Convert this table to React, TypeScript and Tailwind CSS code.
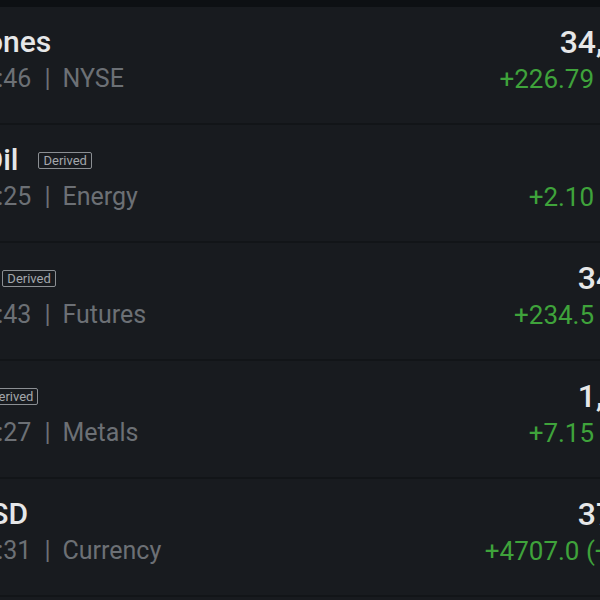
import { Clock } from 'lucide-react';

type Quote = {
  name: string;
  derived?: boolean;
  time: string;
  market: string;
  last: string;
  change: string;
  pct: string;
};

const quotes: Quote[] = [
  { name: 'Dow Jones', time: '16:02:46', market: 'NYSE', last: '34,512.33', change: '+226.79', pct: '(+0.66%)' },
  { name: 'Brent Oil', derived: true, time: '16:02:25', market: 'Energy', last: '86.49', change: '+2.10', pct: '(+2.49%)' },
  { name: 'US 30', derived: true, time: '16:02:43', market: 'Futures', last: '34,588.0', change: '+234.5', pct: '(+0.68%)' },
  { name: 'Gold', derived: true, time: '16:02:27', market: 'Metals', last: '1,984.35', change: '+7.15', pct: '(+0.36%)' },
  { name: 'BTC/USD', time: '16:02:31', market: 'Currency', last: '37,215.0', change: '+4707.0', pct: '(+14.33%)' },
];

export default function App() {
  return (
    <div
      className="w-[600px] h-[600px] overflow-hidden bg-[#181b1f]"
      style={{ fontFamily: 'Roboto, "Noto Sans", sans-serif' }}
    >
      {/* status strip */}
      <div className="h-[7px] bg-[#0d1013]" />

      {quotes.map((q) => (
        <div key={q.name} className="h-[118px] border-b-2 border-[#121518]">
          <div className="ml-[-97px] w-[800px] flex justify-between pt-[17px]">
            {/* name + meta */}
            <div className="flex flex-col">
              <div className="flex items-center gap-[20px] h-[36px]">
                <span className="text-[30px] leading-[36px] font-medium text-[#e6e7e8] whitespace-nowrap">
                  {q.name}
                </span>
                {q.derived && (
                  <span className="h-[17px] px-[4px] border border-[#8b8f93] rounded-[2px] text-[13px] leading-[15px] text-[#a3a7ab] whitespace-nowrap">
                    Derived
                  </span>
                )}
              </div>
              <div className="mt-[4px] flex items-center text-[25px] leading-[30px] text-[#6c7075] whitespace-nowrap">
                <Clock className="w-4 h-4 mr-[16px]" />
                <span className="mr-[13px]">{q.time}</span>
                <span className="mr-[12px]">|</span>
                <span>{q.market}</span>
              </div>
            </div>

            {/* price + change */}
            <div className="flex flex-col items-end">
              <span className="text-[32px] leading-[36px] font-medium text-[#e6e7e8] whitespace-nowrap">
                {q.last}
              </span>
              <span className="mt-[4px] text-[26px] leading-[30px] text-[#3fa33b] whitespace-nowrap">
                {q.change} {q.pct}
              </span>
            </div>
          </div>
        </div>
      ))}
    </div>
  );
}
